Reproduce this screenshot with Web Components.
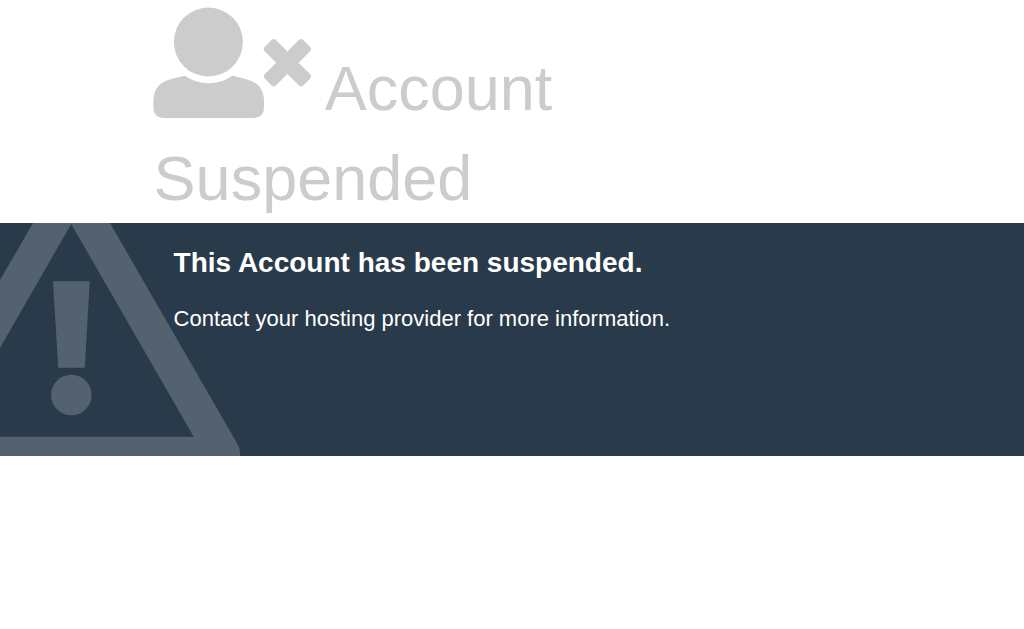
<!DOCTYPE html>
<html lang="en">
<head>
<meta charset="utf-8">
<meta name="viewport" content="width=device-width, initial-scale=1">
<title>Account Suspended</title>
<style>
    body{
        margin: 0;
        font-family: "Liberation Sans", Arial, sans-serif;
        background-color: #fff;
        color: #ccc;
    }
</style>
</head>
<body>
<status-header>Account Suspended</status-header>
<status-notice>
    <span slot="titulo">This Account has been suspended.</span>
    <span slot="informacion">Contact your hosting provider for more information.</span>
</status-notice>

<script>
class statusElement extends HTMLElement{
    constructor(){
        super();
        this.attachShadow({mode: "open"});
    }

    connectedCallback() {
        const template = document.createElement('TEMPLATE');
        template.innerHTML = this.getStyle() + this.getMarkup();
        this.shadowRoot.appendChild(template.content.cloneNode(true));
    }
}

class userTimesIcon extends statusElement{
    getMarkup(){
        return `
            <svg width="157" height="118" viewBox="0.6 0 157 118" aria-hidden="true">
                <circle cx="55" cy="42" r="34.5"/>
                <path d="M31.4 75.8A41.4 41.4 0 0 0 79 75.8L92 79C104 82 110.6 89 110.6 101V107Q110.6 118 99.6 118H11Q0 118 0 107V101C0 89 6 82 18 79Z"/>
                <g transform="translate(134 62.8) rotate(45)">
                    <rect x="-27.2" y="-7.9" width="54.4" height="15.8" rx="3"/>
                    <rect x="-7.9" y="-27.2" width="15.8" height="54.4" rx="3"/>
                </g>
            </svg>
        `;
    }

    getStyle(){
        return `
        <style>
            :host{
                display: inline-block;
                vertical-align: -8px;
            }
            svg{
                display: block;
                overflow: visible;
                fill: currentColor;
            }
        </style>
        `;
    }
}

class warningIcon extends statusElement{
    getMarkup(){
        return `
            <svg width="240" height="233" viewBox="0 0 240 233" aria-hidden="true">
                <path fill-rule="evenodd" d="M33 0H110L237.500 221Q240 225 240 229V233H-97V225ZM71.200 1L-51 213.700H193.700Z"/>
                <path d="M53 58.300H89.700L84.800 144.700H58.200Z"/>
                <circle cx="71.300" cy="172" r="20.300"/>
            </svg>
        `;
    }

    getStyle(){
        return `
        <style>
            :host{
                display: block;
            }
            svg{
                display: block;
                fill: #54616e;
            }
        </style>
        `;
    }
}

class statusHeader extends statusElement{
    getMarkup(){
        return `
            <header>
                <h1><user-times-icon></user-times-icon> <slot></slot></h1>
            </header>
        `;
    }

    getStyle(){
        return `
        <style>
            :host{
                display: block;
            }
            header{
                margin: 0 15%;
            }
            h1{
                margin: 0;
                font-size: 63px;
                font-weight: 400;
                line-height: 90px;
            }
        </style>
        `;
    }
}

class statusNotice extends statusElement{
    getMarkup(){
        return `
            <warning-icon></warning-icon>
            <section>
                <h2><slot name="titulo"></slot></h2>
                <p><slot name="informacion"></slot></p>
            </section>
        `;
    }

    getStyle(){
        return `
        <style>
            :host{
                display: block;
                position: relative;
                overflow: hidden;
                background-color: #293a4a;
                color: #fff;
            }
            /* backdrop, the text runs over it */
            warning-icon{
                position: absolute;
                left: 0;
                bottom: 0;
            }
            section{
                position: relative;
                margin: 0 15%;
                padding: 20px 20px 121px;
            }
            h2{
                margin: 0 0 20px;
                font-size: 28px;
                font-weight: 700;
                line-height: 40px;
            }
            p{
                margin: 0;
                font-size: 22px;
                line-height: 32px;
            }
        </style>
        `;
    }
}

customElements.define("user-times-icon", userTimesIcon);
customElements.define("warning-icon", warningIcon);
customElements.define("status-header", statusHeader);
customElements.define("status-notice", statusNotice);
</script>
</body>
</html>
